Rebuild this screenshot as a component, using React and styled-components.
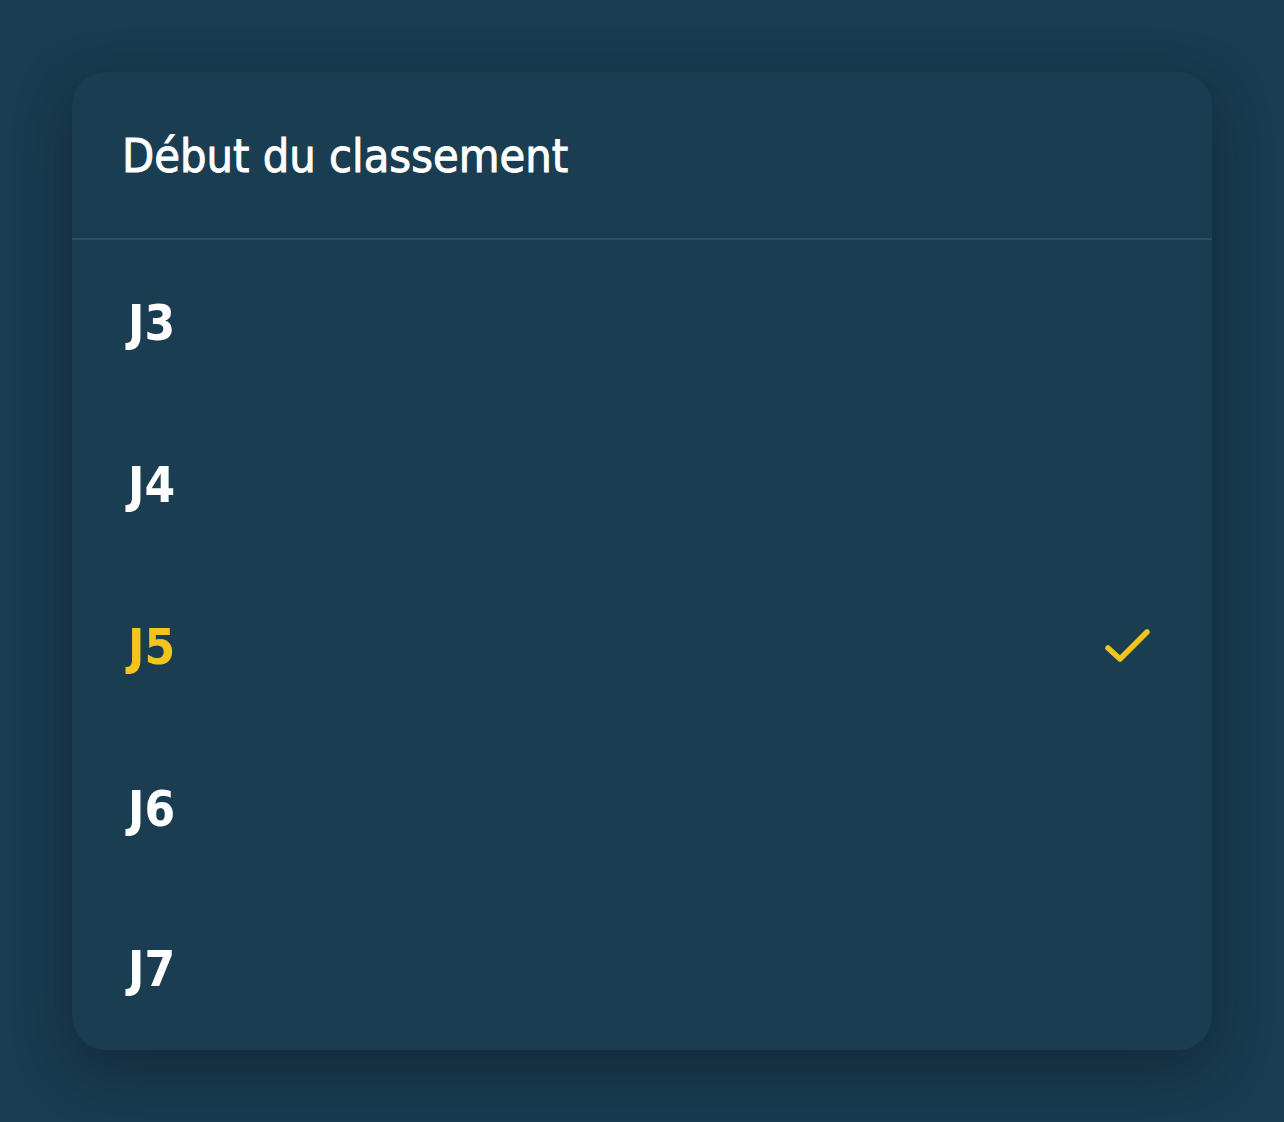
import React from "react";
import styled, { createGlobalStyle } from "styled-components";

const Global = createGlobalStyle`
  html, body { margin: 0; padding: 0; background: #1a3b50; }
  body { font-family: "DejaVu Sans Condensed", "DejaVu Sans", sans-serif; font-stretch: condensed; }
  * { box-sizing: border-box; }
`;

const Page = styled.div`
  width: 1284px;
  height: 1122px;
  padding: 72px 72px 0 72px;
  background: #1a3b50;
`;

const Card = styled.div`
  width: 1140px;
  height: 978px;
  background: #1b3d52;
  border-radius: 34px;
  box-shadow: 0 18px 56px rgba(8, 22, 34, 0.45);
  display: flex;
  flex-direction: column;
  overflow: hidden;
`;

const Header = styled.div`
  height: 168px;
  display: flex;
  align-items: center;
  padding: 0 50px;
  border-bottom: 2px solid #2a4f66;
`;

const Title = styled.h2`
  margin: 0;
  color: #ffffff;
  font-size: 46.5px;
  font-weight: 400;
  -webkit-text-stroke: 0.9px #ffffff;
  letter-spacing: 0;
  line-height: 1;
  padding-top: 2px;
`;

const List = styled.div`
  display: flex;
  flex-direction: column;
`;

const Item = styled.div`
  height: 162px;
  display: flex;
  align-items: center;
  justify-content: space-between;
  padding: 0 58px 0 56px;
  color: ${(p) => (p.$active ? "#f2c41d" : "#ffffff")};
`;

const Label = styled.span`
  font-size: 49px;
  font-weight: 700;
  line-height: 1;
  padding-top: ${(p) => p.$pt || 0}px;
`;

const Check = styled.svg`
  width: 50px;
  height: 42px;
  display: block;
`;

const items = ["J3", "J4", "J5", "J6", "J7"];
const active = "J5";

export default function App() {
  return (
    <>
      <Global />
      <Page>
        <Card>
          <Header>
            <Title>Début du classement</Title>
          </Header>
          <List>
            {items.map((it, i) => (
              <Item key={it} $active={it === active}>
                <Label $pt={i === 4 ? 0 : 4}>{it}</Label>
                {it === active && (
                  <Check viewBox="0 0 50 42" fill="none">
                    <polyline
                      points="4,24 16,35 43,8"
                      stroke="#f2c41d"
                      strokeWidth="5.5"
                      strokeLinecap="round"
                      strokeLinejoin="round"
                    />
                  </Check>
                )}
              </Item>
            ))}
          </List>
        </Card>
      </Page>
    </>
  );
}
